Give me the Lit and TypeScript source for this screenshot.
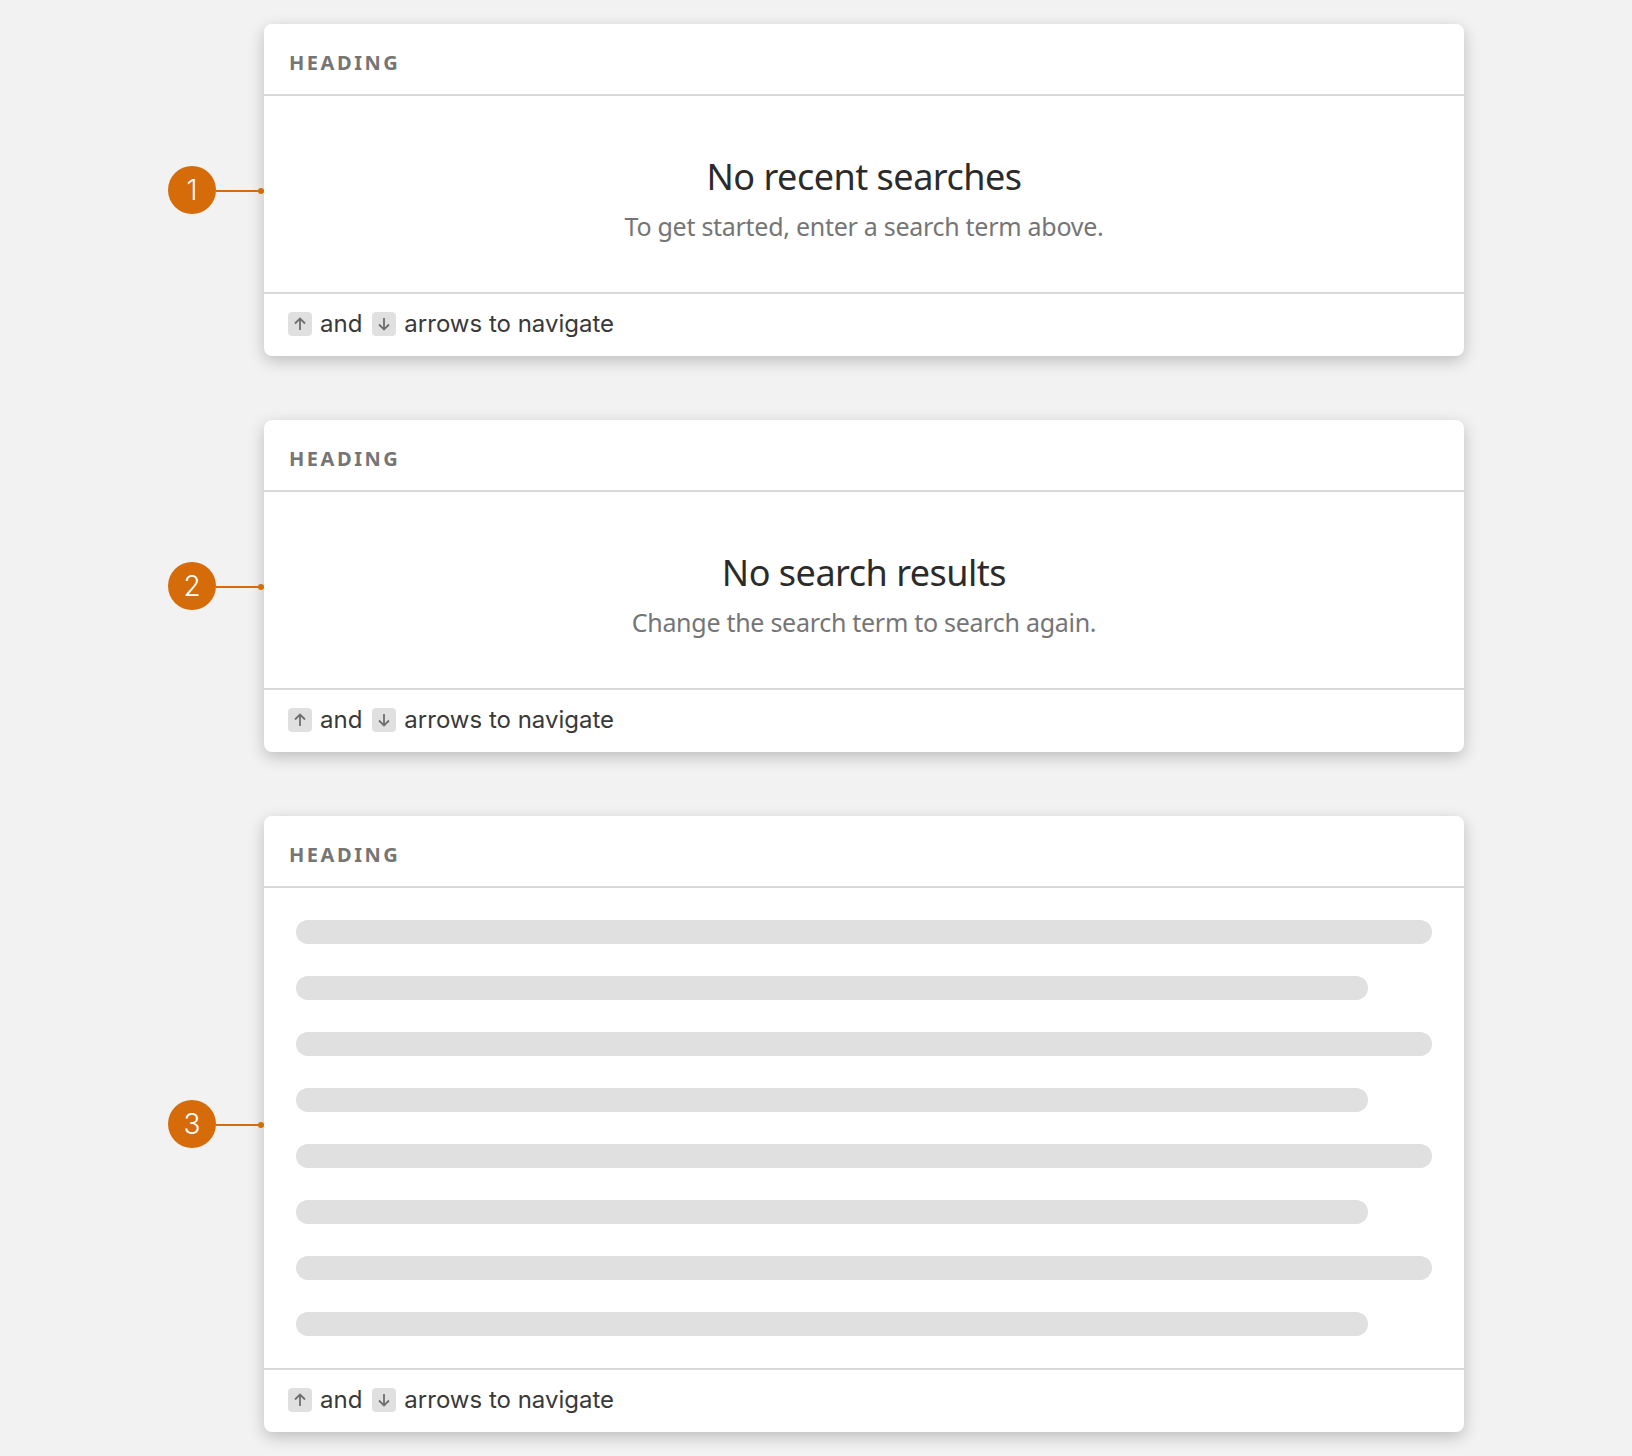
import {LitElement, css, html} from 'lit';
import {customElement} from 'lit/decorators.js';

const upArrow = html`<svg viewBox="0 0 24 24" width="24" height="24"><path d="M12 18V6.5M7 11.5l5-5 5 5" fill="none" stroke="#6f6f6f" stroke-width="1.8"/></svg>`;
const downArrow = html`<svg viewBox="0 0 24 24" width="24" height="24"><path d="M12 6v11.5M7 12.5l5 5 5-5" fill="none" stroke="#6f6f6f" stroke-width="1.8"/></svg>`;

@customElement('app-root')
export class AppRoot extends LitElement {
  static styles = css`
    :host {
      display: block;
      background: #f2f2f2;
      min-height: 1456px;
      box-sizing: border-box;
      padding: 24px 168px;
      font-family: Inter, sans-serif;
    }
    .stack {
      display: flex;
      flex-direction: column;
      gap: 64px;
    }
    .row {
      display: flex;
      align-items: center;
    }
    .badge {
      width: 48px;
      height: 48px;
      border-radius: 50%;
      background: #d56b09;
      color: #fff;
      font-size: 28px;
      font-weight: 300;
      display: flex;
      align-items: center;
      justify-content: center;
      flex: none;
    }
    .leader {
      position: relative;
      width: 48px;
      height: 2px;
      margin-top: 2px;
      background: #d56b09;
      flex: none;
    }
    .leader::after {
      content: '';
      position: absolute;
      right: 0;
      top: -2px;
      width: 6px;
      height: 6px;
      border-radius: 50%;
      background: #d56b09;
    }
    .card {
      width: 1200px;
      background: #fff;
      border-radius: 8px;
      box-shadow: 0 5px 16px rgba(0, 0, 0, 0.22);
    }
    .head {
      height: 72px;
      box-sizing: border-box;
      padding: 6px 24px 0 25px;
      display: flex;
      align-items: center;
      border-bottom: 2px solid #d9d9d9;
      font-family: 'Noto Sans', sans-serif;
      font-weight: 700;
      font-size: 20px;
      letter-spacing: 2.55px;
      color: #757575;
    }
    .empty {
      height: 196px;
      box-sizing: border-box;
      padding-top: 59px;
      text-align: center;
      font-family: 'Noto Sans', sans-serif;
    }
    .title {
      font-size: 36px;
      line-height: 44px;
      color: #2b2b2b;
      letter-spacing: -0.5px;
    }
    .sub {
      font-size: 25px;
      line-height: 32px;
      margin-top: 11px;
      color: #757575;
      letter-spacing: -0.28px;
    }
    .bars {
      padding: 32px;
      display: flex;
      flex-direction: column;
      gap: 32px;
    }
    .bar {
      height: 24px;
      border-radius: 12px;
      background: #e0e0e0;
    }
    .bar.short {
      width: 1072px;
    }
    .foot {
      height: 64px;
      box-sizing: border-box;
      border-top: 2px solid #d9d9d9;
      padding: 0 24px 2px;
      display: flex;
      align-items: center;
      gap: 8px;
      font-size: 24px;
      color: #393939;
    }
    .label {
      margin-top: -2px;
    }
    .and {
      margin-right: 2px;
    }
    .key {
      width: 24px;
      height: 24px;
      border-radius: 4px;
      background: #e0e0e0;
      display: flex;
    }
  `;

  renderFoot() {
    return html`<div class="foot">
      <span class="key">${upArrow}</span>
      <span class="label and">and</span>
      <span class="key">${downArrow}</span>
      <span class="label">arrows to navigate</span>
    </div>`;
  }

  renderCard(n: number, body: unknown) {
    return html`<div class="row">
      <div class="badge">${n}</div>
      <div class="leader"></div>
      <div class="card">
        <div class="head">HEADING</div>
        ${body}
        ${this.renderFoot()}
      </div>
    </div>`;
  }

  renderEmpty(title: string, sub: string) {
    return html`<div class="empty">
      <div class="title">${title}</div>
      <div class="sub">${sub}</div>
    </div>`;
  }

  render() {
    const bars = [0, 1, 2, 3, 4, 5, 6, 7];
    return html`<div class="stack">
      ${this.renderCard(1, this.renderEmpty('No recent searches', 'To get started, enter a search term above.'))}
      ${this.renderCard(2, this.renderEmpty('No search results', 'Change the search term to search again.'))}
      ${this.renderCard(3, html`<div class="bars">
        ${bars.map((i) => html`<div class="bar ${i % 2 ? 'short' : ''}"></div>`)}
      </div>`)}
    </div>`;
  }
}
